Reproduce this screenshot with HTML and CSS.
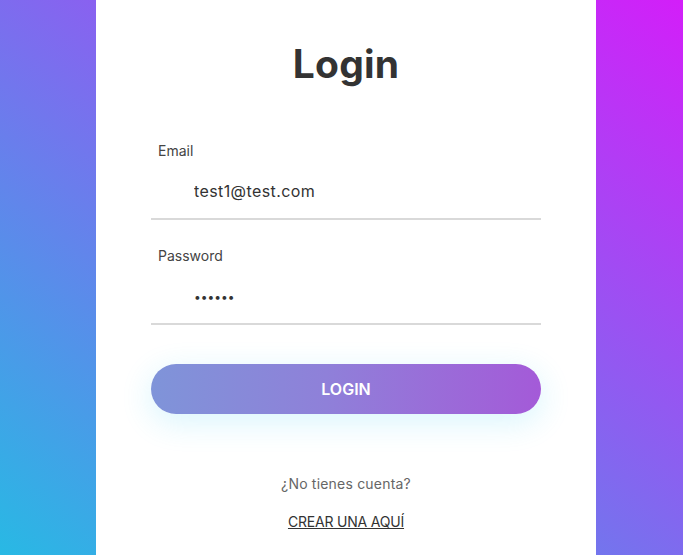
FILE: index.html
```html
<!DOCTYPE html>
<html lang="es">
<head>
<meta charset="utf-8">
<title>Login</title>
<link rel="stylesheet" href="styles.css">
</head>
<body>
<div class="page">
  <div class="card">
    <form class="form" onsubmit="return false">
      <h1 class="title">Login</h1>
      <div class="field field-email">
        <label class="label" for="email">Email</label>
        <input class="input" id="email" type="text" value="test1@test.com">
      </div>
      <div class="field field-pass">
        <label class="label" for="pass">Password</label>
        <input class="input input-pass" id="pass" type="password" value="123456">
      </div>
      <button class="btn" type="submit">LOGIN</button>
      <p class="signup-q">¿No tienes cuenta?</p>
      <a class="signup-link" href="#">CREAR UNA AQUÍ</a>
    </form>
  </div>
</div>
</body>
</html>
```
FILE: styles.css
```css
* { box-sizing: border-box; }
html, body {
  margin: 0;
  padding: 0;
  height: 100%;
  overflow: hidden;
}
body {
  font-family: "Inter", "Noto Sans", sans-serif;
  color: #333;
}
.page {
  height: 100%;
  background: linear-gradient(to top right, #28b9e4, #d31ef9);
  display: flex;
}
.card {
  margin-left: 96px;
  width: 500px;
  background: #fff;
  padding: 40px 55px 0;
}
.form {
  display: flex;
  flex-direction: column;
}
.title {
  margin: 0;
  font-size: 39px;
  font-weight: 700;
  line-height: 47px;
  text-align: center;
  color: #333;
  letter-spacing: 0.2px;
}
.field {
  border-bottom: 2px solid #d9d9d9;
  display: flex;
  flex-direction: column;
}
.field-email { margin-top: 53px; }
.field-pass { margin-top: 25px; }
.label {
  font-size: 14px;
  line-height: 21px;
  padding-left: 7px;
  color: #444;
  font-weight: 400;
}
.input {
  font-family: inherit;
  font-size: 16px;
  font-weight: 400;
  letter-spacing: 0.4px;
  color: #333;
  height: 57px;
  padding: 3px 7px 0 43px;
  border: 0;
  outline: none;
  background: transparent;
  width: 100%;
}
.input-pass {
  font-size: 12px;
  letter-spacing: 0;
}
.btn {
  margin-top: 39px;
  height: 50px;
  border: 0;
  border-radius: 25px;
  background: linear-gradient(to right, #7f94d9, #8f80d9 45%, #a45ad8);
  color: #fff;
  font-family: inherit;
  font-size: 16px;
  font-weight: 600;
  box-shadow: 0 8px 30px 2px rgba(40, 200, 240, 0.16);
  cursor: pointer;
}
.signup-q {
  margin: 59px 0 0;
  text-align: center;
  font-size: 14px;
  line-height: 21px;
  color: #666;
  letter-spacing: 0.2px;
}
.signup-link {
  margin-top: 17px;
  align-self: center;
  font-size: 14px;
  line-height: 21px;
  color: #333;
  text-decoration: underline;
  letter-spacing: -0.2px;
}
```
